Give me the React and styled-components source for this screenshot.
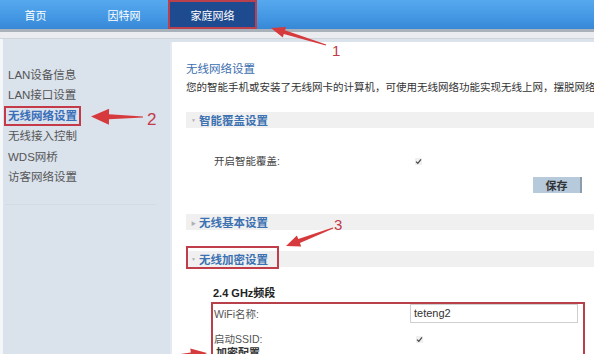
import React from "react";
import styled, { createGlobalStyle } from "styled-components";

const GlobalStyle = createGlobalStyle`
  html, body { margin: 0; padding: 0; background: #fff; }
  body { font-family: "Liberation Sans", "Noto Sans CJK SC", sans-serif; overflow: hidden; }
`;

const Page = styled.div`
  position: relative;
  width: 594px;
  height: 354px;
  overflow: hidden;
  background: #fff;
  font-family: "Liberation Sans", "Noto Sans CJK SC", sans-serif;
`;

const NavBar = styled.div`
  display: flex;
  height: 29px;
  background: linear-gradient(#56a9ee, #4397e3 60%, #3788d6);
`;

const NavTab = styled.div`
  width: ${(p) => p.$w}px;
  margin-right: ${(p) => p.$mr || 0}px;
  box-sizing: border-box;
  display: flex;
  align-items: center;
  justify-content: center;
  color: #fff;
  font-size: 11px;
  background: ${(p) => (p.$active ? "#1e4b8f" : "transparent")};
  border: ${(p) => (p.$active ? "2px solid #b9404c" : "none")};
`;

const SubBar = styled.div`
  height: 10px;
  box-sizing: border-box;
  border-top: 3px solid #a9b1ba;
  background: #eaecef;
  border-bottom: 1px solid #cfd4da;
`;

const Main = styled.div`
  display: flex;
  height: 315px;
  background: #dae2ec;
  border-left: 3px solid #f4f6f8;
`;

const Sidebar = styled.div`
  width: 167px;
  padding-top: 26px;
  box-sizing: border-box;
  display: flex;
  flex-direction: column;
`;

const SideItem = styled.div`
  height: 20.4px;
  line-height: 20.4px;
  padding-left: 5px;
  font-size: 11.5px;
  color: ${(p) => (p.$active ? "#3a6fb9" : "#555")};
  font-weight: ${(p) => (p.$active ? "bold" : "normal")};
  white-space: nowrap;
`;

const Marked = styled.span`
  display: inline-block;
  box-sizing: border-box;
  height: 20px;
  line-height: 16px;
  margin-left: -4px;
  padding: 0 2px;
  border: 2px solid #c43a48;
`;

const SideDivider = styled.div`
  margin: 17px 14px 0 2px;
  height: 1px;
  background: #d3dbe5;
`;

const Content = styled.div`
  width: 424px;
  margin-top: 3px;
  background: #fff;
  border-left: 2px solid #e4eaf1;
  box-sizing: border-box;
  padding: 18px 0 0 14px;
  white-space: nowrap;
  overflow: hidden;
`;

const Title = styled.div`
  line-height: 18px;
  font-size: 11.5px;
  color: #3b6eae;
`;

const Desc = styled.div`
  line-height: 18px;
  font-size: 10.5px;
  color: #333;
`;

const SectionBar = styled.div`
  position: relative;
  margin-top: ${(p) => p.$mt}px;
  height: 16px;
  display: flex;
  align-items: center;
  padding-left: 5px;
  background: #f0f0f0;
  font-size: 11.5px;
  font-weight: bold;
  color: #3c72b2;
  ${(p) =>
    p.$marked &&
    `&::after {
      content: "";
      position: absolute;
      left: 0;
      top: -5px;
      width: 93px;
      height: 23px;
      box-sizing: border-box;
      border: 2px solid #bf3e4a;
    }`}
`;

const Caret = styled.span`
  width: 8px;
  font-size: 5px;
  color: #b0b0b0;
  font-weight: normal;
`;

const FormRow = styled.div`
  display: flex;
  align-items: center;
  margin-top: ${(p) => p.$mt || 0}px;
  padding-left: ${(p) => p.$pl ?? 28}px;
  height: ${(p) => p.$h || 18}px;
`;

const Label = styled.div`
  width: ${(p) => p.$w}px;
  font-size: 10.5px;
  color: ${(p) => p.$c || "#444"};
`;

const Check = styled.span`
  display: inline-flex;
  width: 7px;
  height: 7px;
  margin-top: 3px;
  background: #f0f0f0;
`;

const SaveRow = styled.div`
  display: flex;
  justify-content: flex-end;
  margin-top: 8px;
  padding-right: 12px;
`;

const SaveButton = styled.div`
  width: 49px;
  height: 16px;
  box-sizing: border-box;
  display: flex;
  align-items: center;
  justify-content: center;
  background: #b6cadc;
  border-right: 2px solid #8b9cab;
  font-size: 11px;
  font-weight: bold;
  color: #333;
`;

const BandTitle = styled.div`
  margin-top: 18px;
  padding-left: 27px;
  line-height: 16px;
  font-size: 11px;
  font-weight: bold;
  color: #222;
`;

const RedBox = styled.div`
  margin: 1px 0 0 25px;
  width: 374px;
  height: 80px;
  box-sizing: border-box;
  border: 2px solid #b8404a;
  border-bottom: none;
  padding-left: 1px;
`;

const TextInput = styled.div`
  width: 168px;
  height: 19px;
  box-sizing: border-box;
  border: 1px solid #cfcfcf;
  padding-left: 3px;
  line-height: 17px;
  font-size: 11px;
  color: #333;
`;

const SubHead = styled.div`
  padding-left: 2px;
  line-height: 14px;
  font-size: 11px;
  font-weight: bold;
  color: #333;
`;

const Overlay = styled.svg`
  position: absolute;
  left: 0;
  top: 0;
  pointer-events: none;
`;

function arrow(tx, ty, px, py, headLen, headW, shaftW) {
  const dx = px - tx;
  const dy = py - ty;
  const len = Math.hypot(dx, dy);
  const ux = dx / len;
  const uy = dy / len;
  const nx = -uy;
  const ny = ux;
  const bx = px - ux * headLen;
  const by = py - uy * headLen;
  const pts = [
    [tx + nx * 0.6, ty + ny * 0.6],
    [bx + (nx * shaftW) / 2, by + (ny * shaftW) / 2],
    [bx + (nx * headW) / 2, by + (ny * headW) / 2],
    [px, py],
    [bx - (nx * headW) / 2, by - (ny * headW) / 2],
    [bx - (nx * shaftW) / 2, by - (ny * shaftW) / 2],
    [tx - nx * 0.6, ty - ny * 0.6],
  ];
  return pts.map((p) => p.map((v) => v.toFixed(1)).join(",")).join(" ");
}

const CheckMark = () => (
  <Check>
    <svg width="7" height="7" viewBox="0 0 7 7">
      <path d="M1 3.6 L2.8 5.4 L6 1.4" fill="none" stroke="#444" strokeWidth="1.2" />
    </svg>
  </Check>
);

const sideItems = ["LAN设备信息", "LAN接口设置", "无线网络设置", "无线接入控制", "WDS网桥", "访客网络设置"];

export default function App() {
  return (
    <>
      <GlobalStyle />
      <Page>
        <NavBar>
          <NavTab $w={71} $mr={9}>首页</NavTab>
          <NavTab $w={88}>因特网</NavTab>
          <NavTab $w={89} $active>家庭网络</NavTab>
        </NavBar>
        <SubBar />
        <Main>
          <Sidebar>
            {sideItems.map((t) =>
              t === "无线网络设置" ? (
                <SideItem key={t} $active>
                  <Marked>{t}</Marked>
                </SideItem>
              ) : (
                <SideItem key={t}>{t}</SideItem>
              )
            )}
            <SideDivider />
          </Sidebar>
          <Content>
            <Title>无线网络设置</Title>
            <Desc>您的智能手机或安装了无线网卡的计算机，可使用无线网络功能实现无线上网，摆脱网络</Desc>
            <SectionBar $mt={16}>
              <Caret>▼</Caret>智能覆盖设置
            </SectionBar>
            <FormRow $mt={23}>
              <Label $w={201}>开启智能覆盖:</Label>
              <CheckMark />
            </FormRow>
            <SaveRow>
              <SaveButton>保存</SaveButton>
            </SaveRow>
            <SectionBar $mt={21}>
              <Caret>▶</Caret>无线基本设置
            </SectionBar>
            <SectionBar $mt={21} $marked>
              <Caret>▼</Caret>无线加密设置
            </SectionBar>
            <BandTitle>2.4 GHz频段</BandTitle>
            <RedBox>
              <FormRow $pl={0} $h={19}>
                <Label $w={196} $c="#555">WiFi名称:</Label>
                <TextInput>teteng2</TextInput>
              </FormRow>
              <FormRow $pl={0} $mt={7} $h={16}>
                <Label $w={202} $c="#555">启动SSID:</Label>
                <CheckMark />
              </FormRow>
              <SubHead>加密配置</SubHead>
            </RedBox>
          </Content>
        </Main>
        <Overlay width="594" height="354" viewBox="0 0 594 354">
          <g fill="#d63a3c">
            <polygon points={arrow(326, 45, 271, 28, 14, 11, 4)} />
            <polygon points={arrow(143, 117, 91, 116.5, 18, 16, 5)} />
            <polygon points={arrow(333, 228, 286, 246, 14, 12, 4.5)} />
            <polygon points={arrow(132, 362, 207, 353, 16, 13, 5)} />
          </g>
          <g fill="#c23a48" fontFamily="Liberation Sans, sans-serif">
            <text x="332" y="56" fontSize="15">1</text>
            <text x="147" y="125" fontSize="17">2</text>
            <text x="334" y="230" fontSize="15">3</text>
          </g>
        </Overlay>
      </Page>
    </>
  );
}
